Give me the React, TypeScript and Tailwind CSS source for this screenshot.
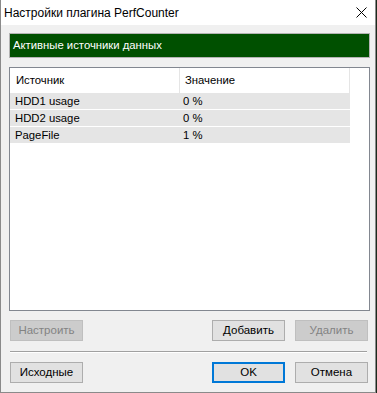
import React from "react";

const font = { fontFamily: '"Liberation Sans", Arial, sans-serif' };

function Btn({ label, disabled, def }: { label: string; disabled?: boolean; def?: boolean }) {
  const base = "w-[73px] h-[21px] flex items-center justify-center text-[11.5px] leading-none";
  const cls = disabled
    ? "bg-[#cccccc] border border-[#bfbfbf] text-[#838383]"
    : def
    ? "bg-[#e1e1e1] border-2 border-[#0078d7] text-black"
    : "bg-[#e1e1e1] border border-[#adadad] text-black";
  return <div className={`${base} ${cls}`}>{label}</div>;
}

const rows = [
  ["HDD1 usage", "0 %"],
  ["HDD2 usage", "0 %"],
  ["PageFile", "1 %"],
];

export default function App() {
  return (
    <div className="w-[377px] h-[393px] bg-[#1c2a1c] flex" style={font}>
      <div className="w-[376px] h-[393px] bg-[#f0f0f0] border-l border-r border-b border-[#8a8a8a] flex flex-col">
        <div className="h-[25px] bg-white flex items-center justify-between pl-[3px] shrink-0">
          <span className="text-[12px] text-black leading-none">Настройки плагина PerfCounter</span>
          <svg width="11" height="11" viewBox="0 0 11 11" className="mr-[8px]">
            <path d="M0.5 0.5 L10.5 10.5 M10.5 0.5 L0.5 10.5" stroke="#000" strokeWidth="1" />
          </svg>
        </div>
        <div className="pl-[8px] flex flex-col w-[369px]">
          <div className="mt-[8px] h-[25px] border border-[#b4b4b4] bg-[#005000] flex items-center pl-[3px]">
            <span className="text-[11.3px] text-white leading-none">Активные источники данных</span>
          </div>
          <div className="mt-[9px] h-[244px] border border-[#828790] bg-white flex flex-col">
            <div className="h-[25px] flex shrink-0">
              <div className="w-[169px] flex items-center pl-[6px] text-[11.3px] text-black">Источник</div>
              <div className="w-[1px] bg-[#e5e5e5]" />
              <div className="w-[169px] flex items-center pl-[5px] text-[11.3px] text-black">Значение</div>
              <div className="w-[1px] bg-[#e5e5e5]" />
            </div>
            {rows.map(([a, b]) => (
              <div key={a} className="w-[340px] h-[16px] mb-[1px] bg-[#e5e5e5] flex items-center text-[11.3px] text-black">
                <div className="w-[168px] pl-[5px]">{a}</div>
                <div className="pl-[5px]">{b}</div>
              </div>
            ))}
          </div>
          <div className="mt-[9px] flex pl-[1px] pr-[2px]">
            <Btn label="Настроить" disabled />
            <div className="flex-1" />
            <Btn label="Добавить" />
            <div className="w-[10px]" />
            <Btn label="Удалить" disabled />
          </div>
          <div className="mt-[10px] ml-[1px] w-[357px] h-[1px] bg-[#a0a0a0]" />
          <div className="ml-[1px] w-[357px] h-[1px] bg-white" />
          <div className="mt-[9px] flex pl-[1px] pr-[2px]">
            <Btn label="Исходные" />
            <div className="flex-1" />
            <Btn label="OK" def />
            <div className="w-[10px]" />
            <Btn label="Отмена" />
          </div>
        </div>
      </div>
    </div>
  );
}
